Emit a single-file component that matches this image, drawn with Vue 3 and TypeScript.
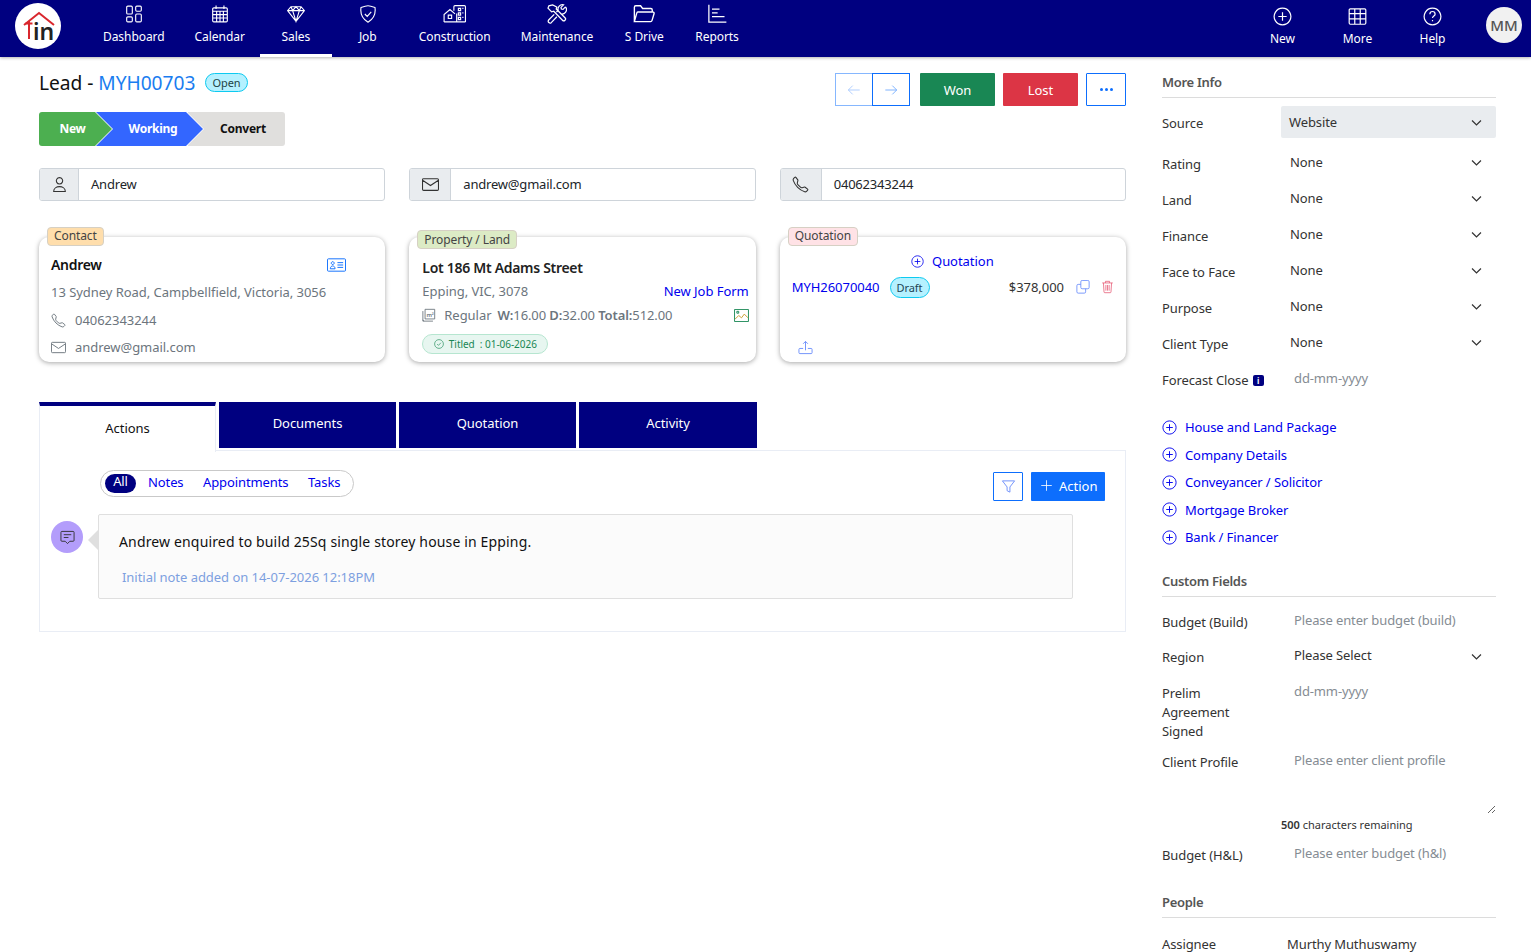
<template>
  <div class="page">
    <header class="topbar">
      <div class="logo">
        <svg class="logo-roof" viewBox="0 0 46 46">
          <path d="M9 22 L24 10 L39 22" />
          <path d="M14 18 V36 M10.500 20.500 H17.500" />
        </svg>
        <span class="logo-text">in</span>
      </div>
      <nav class="nav-left">
        <a v-for="item in leftNav" :key="item.label" class="nav-item" :class="{ active: item.active }">
          <svg class="nav-icon" :class="item.size" :viewBox="item.icon === 'construction' ? '0 0 21 16' : '0 0 16 16'"><path :d="icons[item.icon]" /></svg>
          <span>{{ item.label }}</span>
        </a>
      </nav>
      <div class="nav-right">
        <a v-for="item in rightNav" :key="item.label" class="nav-item right">
          <svg class="nav-icon" viewBox="0 0 16 16"><path :d="icons[item.icon]" /></svg>
          <span>{{ item.label }}</span>
        </a>
        <div class="avatar">MM</div>
      </div>
    </header>

    <main class="content">
      <section class="left">
        <div class="title-row">
          <h1 class="title">Lead - <span class="lead-id">MYH00703</span></h1>
          <span class="badge-open">Open</span>
          <div class="title-actions">
            <div class="arrows">
              <button class="arrow disabled"><svg viewBox="0 0 16 16"><path :d="icons.left" /></svg></button>
              <button class="arrow"><svg viewBox="0 0 16 16"><path :d="icons.right" /></svg></button>
            </div>
            <button class="btn won">Won</button>
            <button class="btn lost">Lost</button>
            <button class="btn dots"><i></i><i></i><i></i></button>
          </div>
        </div>

        <div class="steps">
          <div class="step new">New</div>
          <div class="step working">Working</div>
          <div class="step convert">Convert</div>
        </div>

        <div class="three inputs">
          <div v-for="field in contactFields" :key="field.value" class="input-group">
            <span class="addon" :style="{ width: field.addon + 'px' }">
              <svg viewBox="0 0 16 16"><path :d="icons[field.icon]" /></svg>
            </span>
            <span class="input-value">{{ field.value }}</span>
          </div>
        </div>

        <div class="three cards">
          <article class="card">
            <span class="tag contact">Contact</span>
            <div class="card-name">
              <span>Andrew</span>
              <svg class="id-icon" viewBox="0 0 20 14"><path d="M1.500 .5h17a1 1 0 0 1 1 1v11a1 1 0 0 1-1 1h-17a1 1 0 0 1-1-1v-11a1 1 0 0 1 1-1z M3.500 11c0-4 5-4 5 0z M6 3.500a1.500 1.500 0 1 0 .01 0z M11 4.500h6 M11 7h6 M11 9.500h6" /></svg>
            </div>
            <div class="muted addr">13 Sydney Road, Campbellfield, Victoria, 3056</div>
            <div class="muted line phone"><svg viewBox="0 0 16 16"><path :d="icons.phone" /></svg>04062343244</div>
            <div class="muted line mail"><svg viewBox="0 0 16 16"><path :d="icons.mail" /></svg>andrew@gmail.com</div>
          </article>

          <article class="card">
            <span class="tag land">Property / Land</span>
            <div class="lot-name">Lot 186 Mt Adams Street</div>
            <div class="lot-row">
              <span class="muted">Epping, VIC, 3078</span>
              <a class="link">New Job Form</a>
            </div>
            <div class="lot-row dims">
              <span class="muted dims-text">
                <svg class="area-icon" viewBox="0 0 16 16"><path d="M1 3.500V15h11.500 M3.500 1.500h11V12.500h-11z M1 13.500l1 1.500" /><text x="5" y="10">m²</text></svg>
                <span>Regular</span>
                <span class="dim-vals"><b>W:</b>16.00 <b>D:</b>32.00 <b>Total:</b>512.00</span>
              </span>
              <svg class="pic-icon" viewBox="0 0 16 14"><path class="pic-frame" d="M.5 .5h15v13H.5z" /><path class="pic-line" d="M1 11l4-4 3 2.500 3-4 4 4" /><path class="pic-sun" d="M3 2.500h2v2H3z" /></svg>
            </div>
            <span class="titled">
              <svg viewBox="0 0 16 16"><path :d="icons.checkCircle" /></svg>
              Titled&nbsp; : 01-06-2026
            </span>
          </article>

          <article class="card">
            <span class="tag quote">Quotation</span>
            <a class="add-quote link">
              <svg viewBox="0 0 16 16"><path :d="icons.plusCircle" /></svg>
              Quotation
            </a>
            <div class="quote-row">
              <a class="link">MYH26070040</a>
              <span class="badge-draft">Draft</span>
              <span class="amount">$378,000</span>
              <svg class="copy-icon" viewBox="0 0 16 16"><path d="M5.500 2a1.500 1.500 0 0 1 1.500-1.500h6.500A1.500 1.500 0 0 1 15 2v6.500a1.500 1.500 0 0 1-1.500 1.500H7a1.500 1.500 0 0 1-1.500-1.500z M5.500 5H2.500A1.500 1.500 0 0 0 1 6.500V13.500A1.500 1.500 0 0 0 2.500 15h7A1.500 1.500 0 0 0 11 13.500V10" /></svg>
              <svg class="trash-icon" viewBox="0 0 16 16"><path d="M1.500 3h13 M5.500 3V1h5v2 M3 3l.7 11a1 1 0 0 0 1 1h6.600a1 1 0 0 0 1-1L13 3 M6 5.500v7 M8 5.500v7 M10 5.500v7" /></svg>
            </div>
            <svg class="upload-icon" viewBox="0 0 16 16"><path d="M8 11V1.500 M5.500 4L8 1.500 10.500 4 M5.500 9H2a1 1 0 0 0-1 1v3.500a1 1 0 0 0 1 1h12a1 1 0 0 0 1-1V10a1 1 0 0 0-1-1h-3.500" /></svg>
          </article>
        </div>

        <div class="tabs">
          <div class="tab current">Actions</div>
          <div v-for="tab in tabs" :key="tab" class="tab">{{ tab }}</div>
        </div>
        <div class="panel">
          <div class="panel-top">
            <div class="filters">
              <span class="filter selected">All</span>
              <a v-for="f in filters" :key="f" class="filter">{{ f }}</a>
            </div>
            <div class="panel-actions">
              <button class="filter-btn"><svg viewBox="0 0 16 16"><path d="M1.500 2h13L9.500 8.500V14l-3-1.500v-4z" /></svg></button>
              <button class="action-btn"><svg viewBox="0 0 16 16"><path d="M8 1.500v13 M1.500 8h13" /></svg>Action</button>
            </div>
          </div>
          <div class="note-row">
            <div class="note-avatar">
              <svg viewBox="0 0 16 16"><path d="M2 1.500h12a1 1 0 0 1 1 1v8.500a1 1 0 0 1-1 1h-3.500L8 14.500 5.500 12H2a1 1 0 0 1-1-1V2.500a1 1 0 0 1 1-1z M4 5h8 M4 8h5" /></svg>
            </div>
            <div class="note">
              <p class="note-text">Andrew enquired to build 25Sq single storey house in Epping.</p>
              <p class="note-meta">Initial note added on 14-07-2026 12:18PM</p>
            </div>
          </div>
        </div>
      </section>

      <aside class="side">
        <h2 class="side-head first">More Info</h2>
        <div class="side-row source">
          <label>Source</label>
          <div class="select filled">Website<svg viewBox="0 0 16 16"><path :d="icons.chevron" /></svg></div>
        </div>
        <div v-for="row in infoRows" :key="row" class="side-row">
          <label>{{ row }}</label>
          <div class="select">None<svg viewBox="0 0 16 16"><path :d="icons.chevron" /></svg></div>
        </div>
        <div class="side-row">
          <label>Forecast Close <span class="info">i</span></label>
          <input class="field" placeholder="dd-mm-yyyy" />
        </div>

        <ul class="side-links">
          <li v-for="l in sideLinks" :key="l">
            <svg viewBox="0 0 16 16"><path :d="icons.plusCircle" /></svg>
            <a>{{ l }}</a>
          </li>
        </ul>

        <h2 class="side-head custom">Custom Fields</h2>
        <div class="side-row budget">
          <label>Budget (Build)</label>
          <input class="field" placeholder="Please enter budget (build)" />
        </div>
        <div class="side-row region">
          <label>Region</label>
          <div class="select">Please Select<svg viewBox="0 0 16 16"><path :d="icons.chevron" /></svg></div>
        </div>
        <div class="side-row tall">
          <label>Prelim<br />Agreement<br />Signed</label>
          <input class="field" placeholder="dd-mm-yyyy" />
        </div>
        <div class="side-row profile">
          <label>Client Profile</label>
          <textarea class="field area" placeholder="Please enter client profile"></textarea>
        </div>
        <div class="remaining"><b>500</b> characters remaining</div>
        <div class="side-row budget">
          <label>Budget (H&amp;L)</label>
          <input class="field" placeholder="Please enter budget (h&l)" />
        </div>

        <h2 class="side-head people">People</h2>
        <div class="side-row assignee">
          <label>Assignee</label>
          <span>Murthy Muthuswamy</span>
        </div>
      </aside>
    </main>
  </div>
</template>

<script setup lang="ts">
const icons: Record<string, string> = {
  dashboard: 'M2.500 1h3a1 1 0 0 1 1 1v5a1 1 0 0 1-1 1h-3a1 1 0 0 1-1-1V2a1 1 0 0 1 1-1z M2.500 10.500h3a1 1 0 0 1 1 1V14a1 1 0 0 1-1 1h-3a1 1 0 0 1-1-1v-2.500a1 1 0 0 1 1-1z M10.500 1h3a1 1 0 0 1 1 1v2.500a1 1 0 0 1-1 1h-3a1 1 0 0 1-1-1V2a1 1 0 0 1 1-1z M10.500 8h3a1 1 0 0 1 1 1v5a1 1 0 0 1-1 1h-3a1 1 0 0 1-1-1V9a1 1 0 0 1 1-1z',
  calendar: 'M2.500 2.500h11a1 1 0 0 1 1 1V14a1 1 0 0 1-1 1h-11a1 1 0 0 1-1-1V3.500a1 1 0 0 1 1-1z M4.500 .5v3 M11.500 .5v3 M1.500 5.500h13 M1.500 8.500h13 M1.500 11.500h13 M5 5.500V15 M8 5.500V15 M11 5.500V15',
  gem: 'M3.500 1.500h9l3 3.500L8 14.500.5 5z M.5 5h15 M3.500 1.500L5 5l3 9.500L11 5l1.500-3.500 M5 5l3-3.500L11 5',
  shield: 'M8 .7C6.700.7 3.500 1.600 1.800 2.200c-.8 5.200 1.100 10 6.200 13.100 5.100-3.100 7-7.900 6.200-13.100C12.500 1.600 9.300.7 8 .7z M5.200 8l2.100 2.100 3.600-3.900',
  construction: 'M.8 15V8.500L6 4l4.500 3.900 M.8 15h19 M9.500 5V1.500a1 1 0 0 1 1-1h8.300a1 1 0 0 1 1 1V15 M4.500 9h3v3h-3z M12 7.500V15 M13.500 3h2v2h-2z M17 3h1 M13.500 7h2v2h-2z M17 7h1 M13.500 11h2v2h-2z M17 11h1',
  tools: 'M1.500 1.500L.8 3.300l2.900 3 1.700-.5 7 7.200a1.400 1.400 0 0 0 2-2l-7-7 .4-1.600L4.500.7z M14.800 2.300l-2 2-1.300-.3-.3-1.300 2-2a3.500 3.500 0 0 0-4.200 4.500L7.500 6.400 M5.800 8.300L1.300 12.800a1.500 1.500 0 0 0 2.100 2.100l4.500-4.700 M10.500 7.600a3.500 3.500 0 0 0 4.300-5.300',
  folder: 'M1 13.500V3a1 1 0 0 1 1-1h3.500l1.500 2h6a1 1 0 0 1 1 1v1.500 M1 13.500h11.800a1 1 0 0 0 1-.7l1.500-5a1 1 0 0 0-1-1.300H3.800a1 1 0 0 0-1 .7z',
  reports: 'M1.500 .5v14h14 M4 4h6 M4 7h4.500 M4 10h10',
  plusCircle: 'M8 1a7 7 0 1 0 .01 0z M8 4.500v7 M4.500 8h7',
  grid: 'M2 1.500h12a1 1 0 0 1 1 1v11a1 1 0 0 1-1 1H2a1 1 0 0 1-1-1v-11a1 1 0 0 1 1-1z M1 5.500h14 M1 10h14 M5.700 1.500v13 M10.300 1.500v13',
  help: 'M8 1a7 7 0 1 0 .01 0z M5.800 6a2.200 2.200 0 0 1 4.400 0c0 1.500-2.200 1.600-2.200 3.300 M8 11v1',
  person: 'M8 1.500a3 3 0 1 0 .01 0z M2.500 14.500c0-6 11-6 11 0z',
  mail: 'M1.500 2.500h13a1 1 0 0 1 1 1v9a1 1 0 0 1-1 1h-13a1 1 0 0 1-1-1v-9a1 1 0 0 1 1-1z M.5 4l7.500 5 7.500-5',
  phone: 'M3.654 1.328a.678.678 0 0 0-1.015-.063L1.605 2.300c-.483.484-.661 1.169-.45 1.770a17.568 17.568 0 0 0 4.168 6.608 17.569 17.569 0 0 0 6.608 4.168c.601.211 1.286.033 1.770-.45l1.034-1.034a.678.678 0 0 0-.063-1.015l-2.307-1.794a.678.678 0 0 0-.58-.122l-2.190.547a1.745 1.745 0 0 1-1.657-.459L5.482 8.062a1.745 1.745 0 0 1-.46-1.657l.548-2.190a.678.678 0 0 0-.122-.58z',
  left: 'M14.500 8H1.500 M6.500 3L1.500 8l5 5',
  right: 'M1.500 8h13 M9.500 3l5 5-5 5',
  chevron: 'M2.500 5.500L8 11l5.500-5.500',
  checkCircle: 'M8 1a7 7 0 1 0 .01 0z M5 8l2.200 2.200L11 6',
}

const leftNav = [
  { label: 'Dashboard', icon: 'dashboard' },
  { label: 'Calendar', icon: 'calendar' },
  { label: 'Sales', icon: 'gem', active: true },
  { label: 'Job', icon: 'shield' },
  { label: 'Construction', icon: 'construction', size: 'wide' },
  { label: 'Maintenance', icon: 'tools', size: 'big' },
  { label: 'S Drive', icon: 'folder', size: 'bigger' },
  { label: 'Reports', icon: 'reports', size: 'big' },
]

const rightNav = [
  { label: 'New', icon: 'plusCircle' },
  { label: 'More', icon: 'grid' },
  { label: 'Help', icon: 'help' },
]

const contactFields = [
  { icon: 'person', value: 'Andrew', addon: 39 },
  { icon: 'mail', value: 'andrew@gmail.com', addon: 41 },
  { icon: 'phone', value: '04062343244', addon: 41 },
]

const tabs = ['Documents', 'Quotation', 'Activity']
const filters = ['Notes', 'Appointments', 'Tasks']
const infoRows = ['Rating', 'Land', 'Finance', 'Face to Face', 'Purpose', 'Client Type']
const sideLinks = ['House and Land Package', 'Company Details', 'Conveyancer / Solicitor', 'Mortgage Broker', 'Bank / Financer']
</script>

<style>
html,
body {
  margin: 0;
  background: #fff;
}
</style>

<style scoped>
.page {
  height: 952px;
  overflow: hidden;
  font-family: "Noto Sans", sans-serif;
  font-size: 13px;
  line-height: 20px;
  letter-spacing: -0.04px;
  color: #212529;
}

svg {
  fill: none;
  stroke: currentColor;
  stroke-width: 1;
  flex: none;
}

/* top bar */
.topbar {
  display: flex;
  height: 57px;
  background: #000080;
  color: #fff;
  box-shadow: 0 1px 3px rgba(0, 0, 0, 0.3);
  position: relative;
  font-size: 12px;
  letter-spacing: -0.06px;
}

.logo {
  position: relative;
  flex: none;
  width: 46px;
  height: 46px;
  margin: 3px 27px 0 15px;
  border-radius: 50%;
  background: #fff;
}

.logo-roof {
  position: absolute;
  inset: 0;
  stroke: #d9272e;
  stroke-width: 2;
}

.logo-text {
  position: absolute;
  left: 18px;
  top: 16px;
  font-size: 23px;
  line-height: 24px;
  font-weight: 600;
  color: #222;
}

.nav-left,
.nav-right {
  display: flex;
}

.nav-right {
  margin-left: auto;
  padding-right: 9px;
}

.nav-item {
  display: flex;
  flex-direction: column;
  align-items: center;
  box-sizing: border-box;
  min-width: 72px;
  height: 57px;
  padding: 5px 15px 0;
}

.nav-item.active {
  border-bottom: 3px solid #fff;
}

.nav-item span {
  margin-top: 4px;
}

.nav-item.right {
  width: 75px;
  padding-top: 7px;
}

.nav-item.right span {
  margin-top: 3px;
}

.nav-icon {
  width: 18px;
  height: 18px;
}

.nav-icon.wide {
  width: 24px;
}

.nav-icon.big {
  width: 20px;
  height: 20px;
  margin: -1px;
}

.nav-icon.bigger {
  width: 22px;
  height: 22px;
  margin: -2px;
}

.nav-item.right .nav-icon {
  width: 19px;
  height: 19px;
}

.avatar {
  width: 36px;
  height: 36px;
  margin: 7px 0 0 16px;
  border-radius: 50%;
  background: #f1f1f1;
  color: #555;
  font-size: 15px;
  font-weight: 500;
  line-height: 36px;
  text-align: center;
}

/* layout */
.content {
  display: flex;
  padding-left: 39px;
}

.left {
  width: 1087px;
  flex: none;
}

.side {
  width: 334px;
  margin-left: 36px;
  flex: none;
  color: #333;
  letter-spacing: -0.1px;
}

/* header row */
.title-row {
  display: flex;
  align-items: flex-start;
  margin-top: 16px;
  height: 33px;
}

.title {
  margin: 0;
  font-size: 19.200px;
  font-weight: 400;
  line-height: 20px;
  color: #111;
}

.lead-id {
  color: #1a7df0;
}

.badge-open {
  box-sizing: border-box;
  height: 19px;
  margin: 0 0 0 10px;
  padding: 0 6px;
  border: 1px solid #0dcaf0;
  border-radius: 10px;
  background: #b5f1ff;
  font-size: 11px;
  line-height: 18px;
  color: #244;
}

.title-actions {
  display: flex;
  margin-left: auto;
}

.arrows {
  display: flex;
  margin-right: 10px;
}

.arrow {
  box-sizing: border-box;
  display: flex;
  align-items: center;
  justify-content: center;
  width: 38px;
  height: 33px;
  padding: 0;
  border: 1px solid #0d6efd;
  background: #fff;
  color: #6ea8fe;
}

.arrow svg {
  width: 14px;
  height: 14px;
}

.arrow.disabled {
  width: 37px;
  border-color: #86b7fe;
  border-right: 0;
  color: #a6c8ff;
}

.btn {
  box-sizing: border-box;
  width: 75px;
  height: 33px;
  margin-right: 8px;
  padding: 0;
  border: 1px solid transparent;
  border-radius: 1px;
  font: inherit;
  color: #fff;
}

.won {
  background: #198754;
  margin-right: 8px;
}

.lost {
  background: #dc3545;
}

.dots {
  display: flex;
  align-items: center;
  justify-content: center;
  gap: 2px;
  width: 40px;
  margin-right: 0;
  border-color: #0d6efd;
  background: #fff;
}

.dots i {
  width: 3px;
  height: 3px;
  border-radius: 50%;
  background: #0d6efd;
}

/* progress steps */
.steps {
  display: flex;
  width: 246px;
  height: 34px;
  margin-top: 6px;
  font-size: 12px;
  font-weight: 700;
  line-height: 33px;
  letter-spacing: -0.25px;
  text-align: center;
}

.step {
  box-sizing: border-box;
  color: #fff;
}

.step.new {
  position: relative;
  z-index: 2;
  width: 75px;
  padding-right: 8px;
  background: #fff;
  clip-path: polygon(0 0, 57px 0, 74px 50%, 57px 100%, 0 100%);
}

.step.new::before {
  content: "";
  position: absolute;
  inset: 0;
  z-index: -1;
  background: #4caf50;
  border-radius: 3px 0 0 3px;
  clip-path: polygon(0 0, 56px 0, 73px 50%, 56px 100%, 0 100%);
}

.step.working {
  position: relative;
  z-index: 1;
  width: 109px;
  margin-left: -18px;
  padding-left: 5px;
  background: #fff;
  clip-path: polygon(0 0, 91px 0, 108px 50%, 91px 100%, 0 100%);
}

.step.working::before {
  content: "";
  position: absolute;
  inset: 0;
  z-index: -1;
  background: #3366ff;
  clip-path: polygon(0 0, 90px 0, 107px 50%, 90px 100%, 0 100%);
}

.step.convert {
  flex: 1;
  margin-left: -17px;
  padding-left: 13px;
  background: #e0dfdd;
  color: #111;
  border-radius: 0 3px 3px 0;
}

/* three column rows */
.three {
  display: grid;
  grid-template-columns: repeat(3, 1fr);
  gap: 24px;
}

.inputs {
  margin-top: 22px;
}

.input-group {
  display: flex;
  box-sizing: border-box;
  height: 33px;
  border: 1px solid #ced4da;
  border-radius: 3px;
  overflow: hidden;
}

.addon {
  display: flex;
  align-items: center;
  justify-content: center;
  box-sizing: border-box;
  flex: none;
  background: #e9ecef;
  border-right: 1px solid #ced4da;
  color: #333;
}

.addon svg {
  width: 17px;
  height: 17px;
}

.input-value {
  padding-left: 12px;
  line-height: 31px;
  letter-spacing: -0.2px;
}

/* cards */
.cards {
  margin-top: 36px;
}

.card {
  position: relative;
  box-sizing: border-box;
  height: 125px;
  padding: 18px 12px 0;
  border-radius: 10px;
  background: #fff;
  box-shadow: 0 1px 5px rgba(0, 0, 0, 0.35);
}

.tag {
  position: absolute;
  left: 8px;
  top: -10px;
  box-sizing: border-box;
  height: 19px;
  padding: 0 6px;
  border: 1px solid #d6d0c4;
  border-radius: 4px;
  font-size: 12px;
  line-height: 16px;
  letter-spacing: -0.1px;
  color: #444;
}

.tag.contact {
  background: #ffdeac;
}

.tag.land {
  top: -7px;
  background: #dcebc5;
  line-height: 17px;
}

.tag.quote {
  background: #ffe2e6;
}

.card-name {
  display: flex;
  align-items: center;
  justify-content: space-between;
  padding-right: 27px;
  font-size: 14px;
  font-weight: 600;
  letter-spacing: -0.3px;
  color: #111;
}

.id-icon {
  width: 19px;
  height: 14px;
  color: #0d6efd;
}

.muted {
  color: #6c757d;
}

.addr {
  margin-top: 7px;
}

.line {
  display: flex;
  align-items: center;
  gap: 9px;
}

.line svg {
  width: 15px;
  height: 15px;
}

.phone {
  margin-top: 8px;
}

.mail {
  margin-top: 7px;
}

.lot-name {
  margin: 3px 0 0 1px;
  font-size: 14px;
  font-weight: 600;
  letter-spacing: -0.3px;
  color: #222;
}

.lot-row {
  display: flex;
  align-items: center;
  justify-content: space-between;
  margin: 3px -5px 0 1px;
}

.dims {
  margin-top: 4px;
}

.dims-text {
  display: flex;
  align-items: center;
}

.area-icon {
  width: 14px;
  height: 14px;
  margin-right: 8px;
}

.area-icon text {
  fill: currentColor;
  stroke: none;
  font-size: 6.500px;
  font-weight: 600;
}

.dim-vals {
  margin-left: 6px;
  letter-spacing: -0.1px;
}

.dim-vals b {
  font-weight: 600;
}

.pic-icon {
  width: 15px;
  height: 13px;
}

.pic-frame {
  stroke: #198754;
}

.pic-line {
  stroke: #c89a2a;
}

.pic-sun {
  stroke: #198754;
}

.link,
.side-links a {
  color: #0000ee;
}

.titled {
  display: inline-flex;
  align-items: center;
  gap: 5px;
  box-sizing: border-box;
  height: 20px;
  margin: 9px 0 0 1px;
  padding: 0 10.500px;
  border: 1px solid #b6e6d0;
  border-radius: 10px;
  background: #e7f6f0;
  font-size: 10px;
  color: #198754;
}

.titled svg {
  width: 10px;
  height: 10px;
}

.add-quote {
  display: flex;
  align-items: center;
  justify-content: center;
  gap: 8px;
  margin: -4px 1px 0 0;
}

.add-quote svg {
  width: 13px;
  height: 13px;
}

.quote-row {
  display: flex;
  align-items: center;
  height: 20px;
  margin-top: 6px;
}

.badge-draft {
  box-sizing: border-box;
  width: 40px;
  height: 21px;
  margin-left: 10px;
  border: 1px solid #0dcaf0;
  border-radius: 11px;
  background: #b5f1ff;
  font-size: 11px;
  line-height: 19px;
  text-align: center;
  color: #245;
}

.amount {
  margin-left: auto;
  color: #333;
}

.copy-icon {
  width: 14px;
  height: 14px;
  margin-left: 12px;
  color: #6d8ffb;
}

.trash-icon {
  width: 13px;
  height: 14px;
  margin-left: 11px;
  color: #e8607a;
}

.upload-icon {
  position: absolute;
  left: 18px;
  bottom: 7px;
  width: 15px;
  height: 15px;
  color: #6d8ffb;
}

/* tabs */
.tabs {
  display: flex;
  align-items: flex-start;
  gap: 3px;
  margin-top: 40px;
  height: 49px;
}

.tab {
  box-sizing: border-box;
  width: 177px;
  height: 46px;
  background: #000080;
  color: #fff;
  line-height: 42px;
  text-align: center;
}

.tab:last-child {
  width: 178px;
}

.tab.current {
  position: relative;
  z-index: 1;
  height: 50px;
  background: #fff;
  border-top: 4px solid #000080;
  border-left: 1px solid #e9edf5;
  border-right: 1px solid #e9edf5;
  color: #111;
  line-height: 44px;
}

.panel {
  box-sizing: border-box;
  height: 182px;
  margin-top: -1px;
  padding: 19px 20px 0 11px;
  border: 1px solid #e9edf5;
}

.panel-top {
  display: flex;
  justify-content: space-between;
  padding-left: 49px;
}

.filters {
  display: flex;
  align-items: center;
  box-sizing: border-box;
  width: 254px;
  height: 27px;
  padding: 0 0 3px 4px;
  border: 1px solid #c9c9c9;
  border-radius: 14px;
  letter-spacing: -0.1px;
}

.filter {
  margin-left: 19.500px;
  color: #0000ee;
}

.filter.selected {
  box-sizing: border-box;
  width: 31px;
  height: 19px;
  margin: 3px -7.500px 0 0;
  border-radius: 10px;
  background: #000080;
  color: #fff;
  line-height: 15px;
  text-align: center;
}

.panel-actions {
  display: flex;
  gap: 8px;
  margin-top: 2px;
}

.filter-btn {
  display: flex;
  align-items: center;
  justify-content: center;
  box-sizing: border-box;
  width: 30px;
  height: 29px;
  padding: 0;
  border: 1px solid #0d6efd;
  border-radius: 1px;
  background: #fff;
  color: #6d8ffb;
}

.filter-btn svg {
  width: 15px;
  height: 15px;
}

.action-btn {
  display: flex;
  align-items: center;
  gap: 6px;
  box-sizing: border-box;
  width: 74px;
  height: 29px;
  padding: 0 0 2px 9px;
  border: 0;
  border-radius: 1px;
  background: #0d6efd;
  font: inherit;
  color: #fff;
}

.action-btn svg {
  width: 13px;
  height: 13px;
}

.note-row {
  display: flex;
  margin-top: 13px;
}

.note-avatar {
  display: flex;
  align-items: center;
  justify-content: center;
  width: 32px;
  height: 32px;
  margin-top: 7px;
  flex: none;
  border-radius: 50%;
  background: #b39dfb;
  color: #333;
}

.note-avatar svg {
  width: 15px;
  height: 15px;
}

.note {
  position: relative;
  box-sizing: border-box;
  width: 975px;
  height: 85px;
  margin-left: 15px;
  padding: 17px 20px 0;
  border: 1px solid #dfdfdf;
  border-radius: 2px;
  background: #fbfbfb;
}

.note::before {
  content: "";
  position: absolute;
  left: -11px;
  top: 15px;
  border: 10px solid transparent;
  border-left: 0;
  border-right-color: #dfdfdf;
}

.note-text {
  margin: 0;
  font-size: 14px;
  letter-spacing: 0.15px;
  color: #111;
}

.note-meta {
  margin: 15px 0 0 3px;
  color: #7d9fe0;
}

/* right column */
.side-head {
  margin: 0;
  padding-bottom: 5px;
  border-bottom: 1px solid #dcdcdc;
  font-size: 13px;
  font-weight: 600;
  letter-spacing: -0.3px;
  color: #555;
}

.side-head.first {
  margin-top: 15px;
  margin-bottom: 8px;
}

.side-head.custom {
  margin-top: 20px;
  margin-bottom: 8px;
}

.side-head.people {
  margin-top: 22px;
  margin-bottom: 8px;
}

.side-row {
  display: grid;
  grid-template-columns: 119px 1fr;
  min-height: 32px;
  margin-bottom: 4px;
}

.side-row.source {
  margin-bottom: 8px;
}

.side-row label {
  padding-top: 8px;
}

.side-row.source label,
.side-row.budget label,
.side-row.region label {
  padding-top: 7px;
}

.side-row.budget {
  margin-bottom: 3px;
}

.side-row.tall {
  min-height: 68px;
  margin-bottom: 0;
}

.side-row.tall label {
  line-height: 19px;
}

.side-row.profile {
  margin-bottom: 0;
}

.side-row.assignee span {
  margin-left: 6px;
  padding-top: 8px;
}

.select {
  display: flex;
  align-items: center;
  justify-content: space-between;
  box-sizing: border-box;
  height: 32px;
  padding: 0 13px 1px 9px;
  border-radius: 2px;
  line-height: 30px;
}

.select.filled {
  padding-left: 8px;
  background: #e9ecef;
}

.region .select {
  padding-left: 13px;
}

.select svg {
  width: 13px;
  height: 13px;
  margin-top: 2px;
  stroke-width: 1.5;
  color: #333;
}

.info {
  display: inline-block;
  width: 11px;
  height: 11px;
  margin-left: 1px;
  border-radius: 2px;
  background: #000080;
  color: #fff;
  font-size: 8px;
  font-weight: 700;
  line-height: 11px;
  text-align: center;
  vertical-align: 1px;
}

.field {
  box-sizing: border-box;
  width: 100%;
  height: 32px;
  padding: 0 12px 1px 13px;
  border: 0;
  outline: 0;
  background: transparent;
  font: inherit;
  letter-spacing: -0.12px;
  color: #333;
}

.field::placeholder {
  color: #858c93;
  opacity: 1;
}

.field.area {
  height: 70px;
  padding-top: 6px;
  display: block;
  resize: vertical;
}

.side-links {
  margin: 19.400px 0 0;
  padding: 0;
  list-style: none;
}

.side-links li {
  display: flex;
  align-items: center;
  gap: 8px;
  height: 27.500px;
}

.side-links svg {
  width: 15px;
  height: 15px;
  color: #0000ee;
}

.remaining {
  margin: 1px 0 0 119px;
  font-size: 11px;
  line-height: 20px;
  letter-spacing: 0;
  color: #333;
}

.remaining + .side-row {
  margin-top: 3px;
}

.remaining b {
  font-weight: 600;
}
</style>
